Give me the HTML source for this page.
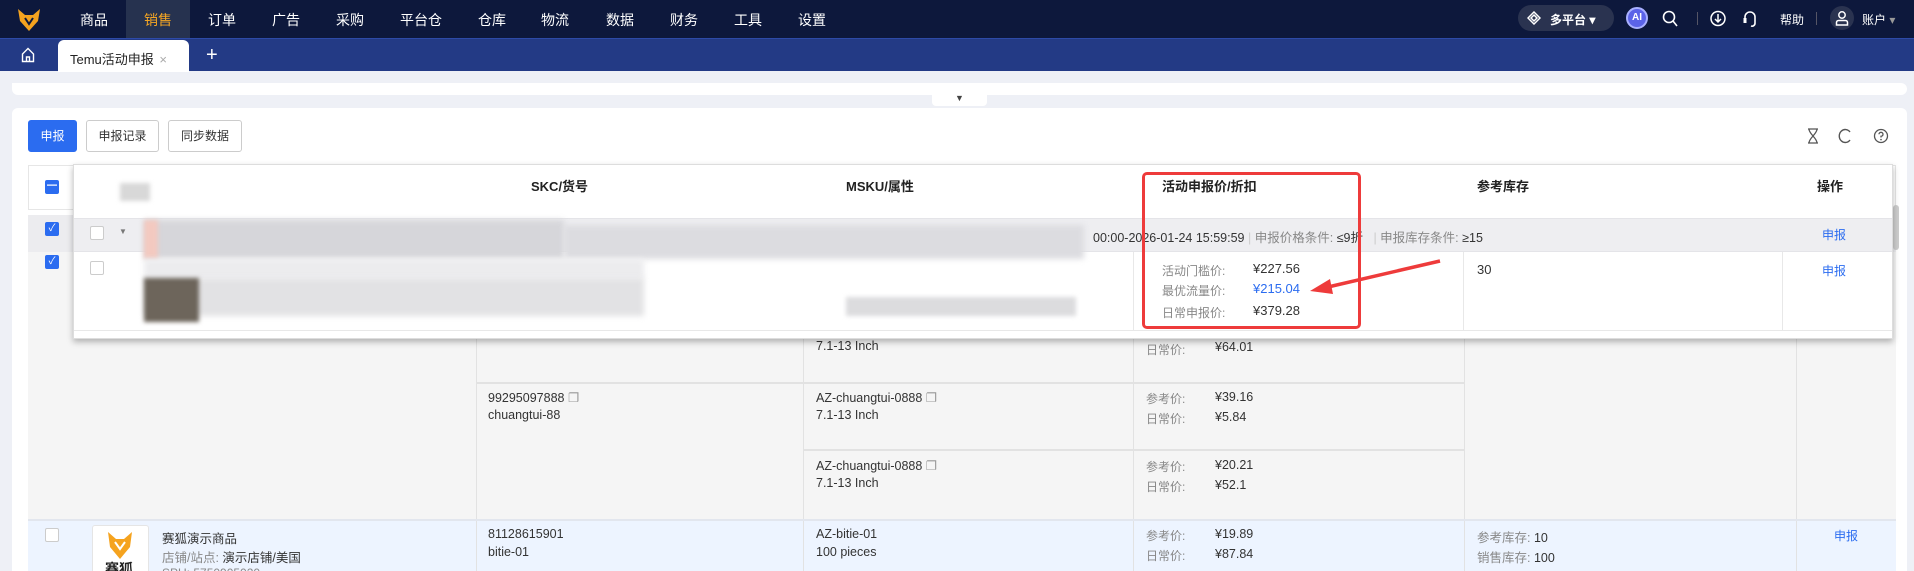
<!DOCTYPE html>
<html style="overflow:hidden;height:571px"><head><meta charset="utf-8"><style>
*{box-sizing:border-box;margin:0;padding:0}
body{width:1914px;height:571px;overflow:hidden;background:#eef0f6;font-family:"Liberation Sans","Noto Sans CJK SC",sans-serif;font-size:12px;color:#333;position:relative}
.a{position:absolute;white-space:nowrap}
.nav{left:0;top:0;width:1914px;height:38px;background:#0d183c}
.tabs{left:0;top:38px;width:1914px;height:33px;background:#233a85;border-top:1px solid #2d4aa8}
.btn{top:120px;height:32px;border:1px solid #ccc;border-radius:3px;background:#fff;line-height:30px;text-align:center;font-size:12px;color:#333}
.cb{width:14px;height:14px;border:1px solid #ccc;border-radius:2px;background:#fff}
.cbc{width:14px;height:14px;border-radius:2px;background:#2b6cf0;color:#fff;font-size:10px;text-align:center;line-height:14px}
.g{color:#888}
.bl{color:#2b6cf0}
.t{font-size:12.5px;color:#333}
</style></head><body>
<div id="wrap" style="position:absolute;left:0;top:0;width:1914px;height:571px;overflow:hidden">
<div class="a nav"></div>
<svg class="a" style="left:16px;top:6px" width="26" height="26" viewBox="0 0 26 26"><path d="M2 3 L9 9 L17 9 L24 3 L22 15 L13 25 L4 15 Z" fill="#f5a31f"/><path d="M9 12 L13 18 L17 12" fill="none" stroke="#0d183c" stroke-width="2"/></svg>
<div class="a" style="left:126px;top:0;width:64px;height:38px;background:#26324f"></div>
<div class="a" style="left:80px;top:10px;color:#fff;font-size:14px">商品</div>
<div class="a" style="left:144px;top:10px;color:#f5a623;font-size:14px">销售</div>
<div class="a" style="left:208px;top:10px;color:#fff;font-size:14px">订单</div>
<div class="a" style="left:272px;top:10px;color:#fff;font-size:14px">广告</div>
<div class="a" style="left:336px;top:10px;color:#fff;font-size:14px">采购</div>
<div class="a" style="left:400px;top:10px;color:#fff;font-size:14px">平台仓</div>
<div class="a" style="left:478px;top:10px;color:#fff;font-size:14px">仓库</div>
<div class="a" style="left:541px;top:10px;color:#fff;font-size:14px">物流</div>
<div class="a" style="left:606px;top:10px;color:#fff;font-size:14px">数据</div>
<div class="a" style="left:670px;top:10px;color:#fff;font-size:14px">财务</div>
<div class="a" style="left:734px;top:10px;color:#fff;font-size:14px">工具</div>
<div class="a" style="left:798px;top:10px;color:#fff;font-size:14px">设置</div>
<div class="a" style="left:1518px;top:5px;width:96px;height:26px;border-radius:13px;background:#2a3350"></div>
<svg class="a" style="left:1527px;top:11px" width="14" height="14" viewBox="0 0 14 14"><path d="M7 1 L13 7 L7 13 L1 7 Z M7 4 L10 7 L7 10 L4 7 Z" fill="none" stroke="#fff" stroke-width="1.5"/></svg>
<div class="a" style="left:1550px;top:11px;color:#fff;font-size:12px;font-weight:bold">多平台 ▾</div>
<div class="a" style="left:1626px;top:7px;width:22px;height:22px;border-radius:50%;background:#5b63e8;border:2px solid #a9b0ff;color:#fff;font-size:10px;font-weight:bold;text-align:center;line-height:18px">AI</div>
<svg class="a" style="left:1662px;top:10px" width="16" height="17" viewBox="0 0 16 17"><circle cx="7" cy="7" r="5.5" fill="none" stroke="#fff" stroke-width="1.6"/><path d="M11 11 L15 16" stroke="#fff" stroke-width="1.6"/></svg>
<div class="a" style="left:1697px;top:12px;width:1px;height:13px;background:#556"></div>
<svg class="a" style="left:1710px;top:10px" width="16" height="17" viewBox="0 0 16 17"><circle cx="8" cy="8.5" r="7" fill="none" stroke="#fff" stroke-width="1.5"/><path d="M8 4 V12 M5 9 L8 12 L11 9" fill="none" stroke="#fff" stroke-width="1.5"/></svg>
<svg class="a" style="left:1742px;top:10px" width="16" height="18" viewBox="0 0 16 18"><path d="M3 10 V7 A5 5 0 0 1 13 7 V10 M13 10 V13 A3 3 0 0 1 9 16" fill="none" stroke="#fff" stroke-width="1.6"/><rect x="1.5" y="8" width="3" height="5" fill="#fff"/></svg>
<div class="a" style="left:1780px;top:11px;color:#fff;font-size:12px">帮助</div>
<div class="a" style="left:1816px;top:12px;width:1px;height:13px;background:#556"></div>
<div class="a" style="left:1830px;top:6px;width:24px;height:24px;border-radius:50%;background:#2a3350"></div>
<svg class="a" style="left:1835px;top:10px" width="14" height="16" viewBox="0 0 14 16"><circle cx="7" cy="5" r="3.2" fill="none" stroke="#fff" stroke-width="1.5"/><path d="M1.5 15 V12.5 A2 2 0 0 1 3.5 10.5 H10.5 A2 2 0 0 1 12.5 12.5 V15 Z" fill="none" stroke="#fff" stroke-width="1.5"/></svg>
<div class="a" style="left:1862px;top:11px;color:#fff;font-size:12px">账户 <span style="color:#999">▾</span></div>
<div class="a tabs"></div>
<svg class="a" style="left:21px;top:47px" width="14" height="16" viewBox="0 0 14 16"><path d="M1.5 7 L7 1.5 L12.5 7 V14.5 H1.5 Z M5.5 14.5 V10 H8.5 V14.5" fill="none" stroke="#fff" stroke-width="1.4"/></svg>
<div class="a" style="left:58px;top:40px;width:131px;height:32px;background:#fff;border-radius:6px 6px 0 0"></div>
<div class="a" style="left:70px;top:49px;font-size:13px;color:#222">Temu活动申报 <span style="color:#aaa;margin-left:2px">×</span></div>
<div class="a" style="left:206px;top:44px;color:#fff;font-size:20px;font-weight:300">+</div>
<div class="a" style="left:12px;top:83px;width:1895px;height:12px;background:#fff;border-radius:0 6px 6px 6px"></div>
<div class="a" style="left:932px;top:94px;width:55px;height:12px;background:#fff;border-radius:0 0 4px 4px"></div>
<div class="a" style="left:955px;top:93px;font-size:9px;color:#444">▼</div>
<div class="a" style="left:12px;top:108px;width:1895px;height:470px;background:#fff;border-radius:6px"></div>
<div class="a btn" style="left:28px;width:49px;background:#2b6cf0;color:#fff;border-color:#2b6cf0">申报</div>
<div class="a btn" style="left:86px;width:73px">申报记录</div>
<div class="a btn" style="left:168px;width:74px">同步数据</div>
<svg class="a" style="left:1807px;top:128px" width="12" height="16" viewBox="0 0 12 16"><path d="M1 1 H11 M1 15 H11 M2 1 C2 6 10 10 10 15 M10 1 C10 6 2 10 2 15" fill="none" stroke="#555" stroke-width="1.3"/></svg>
<svg class="a" style="left:1838px;top:128px" width="14" height="16" viewBox="0 0 14 16"><path d="M12 4 A6 6.5 0 1 0 12 12" fill="none" stroke="#555" stroke-width="1.4"/></svg>
<svg class="a" style="left:1873px;top:128px" width="16" height="16" viewBox="0 0 16 16"><circle cx="8" cy="8" r="6.5" fill="none" stroke="#555" stroke-width="1.3"/><path d="M6 6.3 A2 2 0 1 1 8 8.3 V9.5" fill="none" stroke="#555" stroke-width="1.3"/><circle cx="8" cy="11.6" r=".8" fill="#555"/></svg>
<div class="a" style="left:28px;top:165px;width:1868px;height:45px;background:#fff;border:1px solid #e6e6e6"></div>
<div class="a cbc" style="left:45px;top:180px">━</div>
<div class="a" style="left:28px;top:215px;width:1868px;height:304px;background:#f5f5f5"></div>
<div class="a" style="left:28px;top:215px;width:1868px;height:37px;background:#ececef"></div>
<div class="a cbc" style="left:45px;top:222px">✓</div>
<div class="a cbc" style="left:45px;top:255px">✓</div>
<div class="a" style="left:476px;top:252px;width:1px;height:400px;background:#e2e2e2"></div>
<div class="a" style="left:803px;top:252px;width:1px;height:400px;background:#e2e2e2"></div>
<div class="a" style="left:1133px;top:252px;width:1px;height:400px;background:#e2e2e2"></div>
<div class="a" style="left:1464px;top:252px;width:1px;height:400px;background:#e2e2e2"></div>
<div class="a" style="left:1796px;top:252px;width:1px;height:400px;background:#e2e2e2"></div>
<div class="a" style="left:476px;top:382px;width:988px;height:2px;background:#e2e2e2"></div>
<div class="a" style="left:803px;top:449px;width:661px;height:2px;background:#e2e2e2"></div>
<div class="a" style="left:28px;top:519px;width:1868px;height:60px;background:#edf4ff;border-top:2px solid #e2e6ee"></div>
<div class="a" style="left:476px;top:521px;width:1px;height:60px;background:#e2e2e2"></div>
<div class="a" style="left:803px;top:521px;width:1px;height:60px;background:#e2e2e2"></div>
<div class="a" style="left:1133px;top:521px;width:1px;height:60px;background:#e2e2e2"></div>
<div class="a" style="left:1464px;top:521px;width:1px;height:60px;background:#e2e2e2"></div>
<div class="a" style="left:1796px;top:521px;width:1px;height:60px;background:#e2e2e2"></div>
<div class="a" style="left:1893px;top:205px;width:6px;height:45px;background:#ccc;border-radius:3px"></div>
<div class="a t" style="left:816px;top:339px">7.1-13 Inch</div>
<div class="a g" style="left:1146px;top:341px">日常价:</div><div class="a t" style="left:1215px;top:340px">¥64.01</div>
<div class="a t" style="left:488px;top:390px">99295097888 <span style="color:#999">❐</span></div>
<div class="a t" style="left:488px;top:408px">chuangtui-88</div>
<div class="a t" style="left:816px;top:390px">AZ-chuangtui-0888 <span style="color:#999">❐</span></div>
<div class="a t" style="left:816px;top:408px">7.1-13 Inch</div>
<div class="a g" style="left:1146px;top:390px">参考价:</div><div class="a t" style="left:1215px;top:390px">¥39.16</div>
<div class="a g" style="left:1146px;top:410px">日常价:</div><div class="a t" style="left:1215px;top:410px">¥5.84</div>
<div class="a t" style="left:816px;top:458px">AZ-chuangtui-0888 <span style="color:#999">❐</span></div>
<div class="a t" style="left:816px;top:476px">7.1-13 Inch</div>
<div class="a g" style="left:1146px;top:458px">参考价:</div><div class="a t" style="left:1215px;top:458px">¥20.21</div>
<div class="a g" style="left:1146px;top:478px">日常价:</div><div class="a t" style="left:1215px;top:478px">¥52.1</div>
<div class="a cb" style="left:45px;top:528px"></div>
<div class="a" style="left:92px;top:525px;width:57px;height:60px;background:#fff;border:1px solid #e5e5e5;border-radius:3px"></div>
<svg class="a" style="left:106px;top:530px" width="28" height="30" viewBox="0 0 28 30"><path d="M2 2 L10 9 L18 9 L26 2 L24 17 L14 29 L4 17 Z" fill="#f5a31f"/><path d="M9 12 L14 19 L19 12" fill="none" stroke="#fff" stroke-width="2"/></svg>
<div class="a" style="left:105px;top:559px;font-size:14px;font-weight:bold;color:#222">赛狐</div>
<div class="a t" style="left:162px;top:528px">赛狐演示商品</div>
<div class="a" style="left:162px;top:547px;font-size:12.5px"><span class="g">店铺/站点:</span> 演示店铺/美国</div>
<div class="a g" style="left:162px;top:566px">SPU: 5750905020</div>
<div class="a t" style="left:488px;top:527px">81128615901</div>
<div class="a t" style="left:488px;top:545px">bitie-01</div>
<div class="a t" style="left:816px;top:527px">AZ-bitie-01</div>
<div class="a t" style="left:816px;top:545px">100 pieces</div>
<div class="a g" style="left:1146px;top:527px">参考价:</div><div class="a t" style="left:1215px;top:527px">¥19.89</div>
<div class="a g" style="left:1146px;top:547px">日常价:</div><div class="a t" style="left:1215px;top:547px">¥87.84</div>
<div class="a" style="left:1477px;top:527px;font-size:12.5px"><span class="g">参考库存:</span> 10</div>
<div class="a" style="left:1477px;top:547px;font-size:12.5px"><span class="g">销售库存:</span> 100</div>
<div class="a bl" style="left:1834px;top:527px">申报</div>
<div class="a" style="left:73px;top:164px;width:1820px;height:175px;background:#fff;box-shadow:0 3px 6px rgba(0,0,0,.28);border:1px solid #ddd"></div>
<div class="a" style="left:120px;top:183px;width:30px;height:18px;background:#d8d8d8;filter:blur(2px)"></div>
<div class="a" style="left:531px;top:176px;font-size:13px;font-weight:bold;color:#222">SKC/货号</div>
<div class="a" style="left:846px;top:176px;font-size:13px;font-weight:bold;color:#222">MSKU/属性</div>
<div class="a" style="left:1162px;top:176px;font-size:13px;font-weight:bold;color:#222">活动申报价/折扣</div>
<div class="a" style="left:1477px;top:176px;font-size:13px;font-weight:bold;color:#222">参考库存</div>
<div class="a" style="left:1817px;top:176px;font-size:13px;font-weight:bold;color:#222">操作</div>
<div class="a" style="left:74px;top:218px;width:1818px;height:34px;background:#eeeef1;border-top:1px solid #e4e4e8;border-bottom:1px solid #e4e4e8"></div>
<div class="a cb" style="left:90px;top:226px"></div>
<div class="a" style="left:119px;top:227px;font-size:8px;color:#777">▼</div>
<div class="a" style="left:144px;top:220px;width:420px;height:39px;background:#d6d6da;filter:blur(3px)"></div>
<div class="a" style="left:564px;top:225px;width:520px;height:34px;background:#dcdce0;filter:blur(3px)"></div>
<div class="a" style="left:144px;top:220px;width:14px;height:39px;background:#f3c9c0;filter:blur(2px)"></div>
<div class="a" style="left:1093px;top:227px;font-size:12.5px;color:#333">00:00-2026-01-24 15:59:59 <span style="color:#ccc">|</span> <span class="g">申报价格条件:</span> ≤9折 &nbsp;&nbsp;<span style="color:#ccc">|</span> <span class="g">申报库存条件:</span> ≥15</div>
<div class="a bl" style="left:1822px;top:226px">申报</div>
<div class="a cb" style="left:90px;top:261px"></div>
<div class="a" style="left:144px;top:259px;width:500px;height:20px;background:#ececee;filter:blur(3px)"></div>
<div class="a" style="left:144px;top:278px;width:500px;height:38px;background:#e2e2e4;filter:blur(3px)"></div>
<div class="a" style="left:144px;top:278px;width:55px;height:44px;background:#6d655b;filter:blur(2px)"></div>
<div class="a" style="left:846px;top:297px;width:230px;height:19px;background:#dcdcde;filter:blur(2px)"></div>
<div class="a" style="left:1133px;top:252px;width:1px;height:78px;background:#e8e8e8"></div>
<div class="a" style="left:1463px;top:252px;width:1px;height:78px;background:#e8e8e8"></div>
<div class="a" style="left:1782px;top:252px;width:1px;height:78px;background:#e8e8e8"></div>
<div class="a" style="left:74px;top:330px;width:1818px;height:1px;background:#e8e8e8"></div>
<div class="a g" style="left:1162px;top:262px">活动门槛价:</div><div class="a t" style="left:1253px;top:261px;font-size:13px">¥227.56</div>
<div class="a g" style="left:1162px;top:282px">最优流量价:</div><div class="a bl" style="left:1253px;top:281px;font-size:13px">¥215.04</div>
<div class="a g" style="left:1162px;top:304px">日常申报价:</div><div class="a t" style="left:1253px;top:303px;font-size:13px">¥379.28</div>
<div class="a t" style="left:1477px;top:262px;font-size:13px">30</div>
<div class="a bl" style="left:1822px;top:262px">申报</div>
<div class="a" style="left:1142px;top:172px;width:219px;height:157px;border:3px solid #ee3b3b;border-radius:5px"></div>
<svg class="a" style="left:1300px;top:255px" width="145" height="45" viewBox="0 0 145 45"><path d="M140 6 L28 32" stroke="#ee3b3b" stroke-width="3.5"/><path d="M10 36 L30 24 L33 39 Z" fill="#ee3b3b"/></svg>
</div>
</body></html>
